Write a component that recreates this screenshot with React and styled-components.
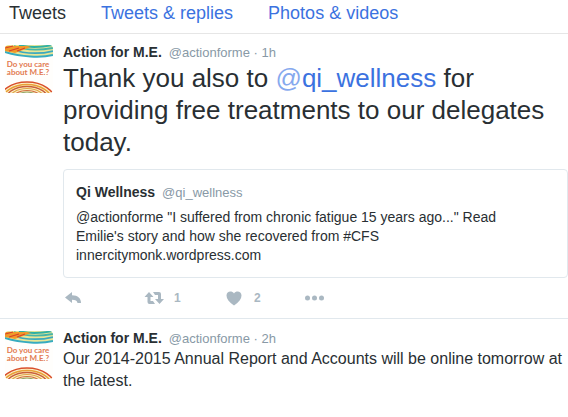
import React from 'react';
import styled, { createGlobalStyle } from 'styled-components';

const GlobalStyle = createGlobalStyle`
  * {
    box-sizing: border-box;
  }

  body {
    margin: 0;
    background: #fff;
    color: #292f33;
    font-family: "Liberation Sans", Arial, sans-serif;
    font-size: 14px;
  }
`;

const Tabs = styled.nav`
  display: flex;
  gap: 35px;
  padding: 3px 9px 10px;
  border-bottom: 1px solid #e6e6e6;
`;

const Tab = styled.a`
  color: ${props => props.$active ? '#292f33' : '#3b72e0'};
  font-size: 18px;
  line-height: 20px;
  white-space: nowrap;
  text-decoration: none;
`;

const TweetItem = styled.article`
  display: flex;
  gap: 10px;
  padding: 12px 0 12px 5px;
  border-bottom: 1px solid #e1e8ed;

  &:first-child {
    padding-top: 11px;
  }

  &:last-child {
    border-bottom: none;
  }
`;

const Avatar = styled.svg`
  flex: none;
  width: 48px;
  height: 48px;
`;

const Content = styled.div`
  flex: 1;
  min-width: 0;
`;

const Byline = styled.header`
  display: flex;
  gap: 7px;
  height: 17px;
  line-height: 15px;
  white-space: nowrap;
`;

const Name = styled.strong`
  font-size: 14px;
`;

const Meta = styled.span`
  color: #8899a6;
  font-size: 13px;
`;

const TweetText = styled.p`
  margin: 0;
  font-size: ${props => props.$large ? '26px' : '16px'};
  line-height: ${props => props.$large ? '32px' : '22px'};
`;

const Mention = styled.a`
  color: #3b72e0;
  text-decoration: none;

  span {
    color: #86a9ee;
  }
`;

const Quote = styled.blockquote`
  margin: 11px 0 0;
  padding: 15px 12px 12px;
  border: 1px solid #e1e8ed;
  border-radius: 4px;
`;

const QuoteText = styled.p`
  margin: 6px 0 0;
  padding-right: 12px;
  font-size: 14px;
  line-height: 19px;
`;

const Actions = styled.div`
  display: flex;
  margin-top: 11px;
  padding-left: 1px;
`;

const Action = styled.button`
  display: flex;
  align-items: center;
  gap: 10px;
  width: 80px;
  height: 17px;
  padding: 0;
  border: none;
  background: none;
  color: #aab8c2;
  font-family: inherit;
  font-size: 12px;
  font-weight: bold;
  cursor: pointer;
`;

const ActionIcon = styled.svg`
  flex: none;
  width: 20px;
  height: 16px;
  fill: currentColor;
`;

const Count = styled.span`
  padding-top: 1px;
`;

function ActionForMeAvatar({ id }) {
  return (
    <Avatar viewBox="0 0 48 48" role="img" aria-label="Action for M.E.">
      <clipPath id={id}>
        <rect width="48" height="48" rx="4" />
      </clipPath>
      <g clipPath={`url(#${id})`} fill="none">
        <rect width="48" height="48" fill="#fffefc" />
        <path d="M0 0H48V10C34 13 20 12 10 9L0 8Z" fill="#e8e696" />
        <path d="M14 0C24 3 38 2 48 0" stroke="#2fb0a4" strokeWidth="2" />
        <path d="M9 1C22 6 36 5 48 3" stroke="#45b4a8" strokeWidth="1.8" />
        <path d="M5 4C20 9 36 9 48 6" stroke="#3aa9c0" strokeWidth="1.8" />
        <path d="M0 7C16 12 36 13 48 10" stroke="#36abc0" strokeWidth="2" />
        <path d="M0 1L22 1L26 2L18 5L10 8L0 6Z" fill="#f09a28" />
        <path d="M0 3L8 1M4 6L14 3M12 6L20 3" stroke="#d8402c" strokeWidth="1.2" />
        <text x="23" y="22" fill="#e27a50" fontFamily="Lato, sans-serif" fontSize="8" fontWeight="bold" textAnchor="middle">Do you care</text>
        <text x="23" y="30" fill="#e27a50" fontFamily="Lato, sans-serif" fontSize="8" fontWeight="bold" textAnchor="middle">about M.E.?</text>
        <ellipse cx="22" cy="56" rx="28" ry="19" fill="#fdf0c6" stroke="#d9502c" strokeWidth="1.5" />
        <ellipse cx="22" cy="56" rx="25" ry="16.500" stroke="#e8a037" strokeWidth="1.5" />
        <ellipse cx="22" cy="56" rx="22" ry="14.500" stroke="#c9603a" strokeWidth="1.5" />
        <ellipse cx="22" cy="56" rx="19" ry="12.500" stroke="#dfa64a" strokeWidth="1.2" />
        <ellipse cx="22" cy="56" rx="16" ry="10.500" stroke="#d07040" strokeWidth="1.2" />
        <ellipse cx="22" cy="56" rx="13" ry="9" stroke="#8fa568" strokeWidth="1.2" />
      </g>
    </Avatar>
  );
}

const icons = {
  Reply: <path d="M1 7.500L8 2V5.200C14 5.200 17 8.500 17 13H13.500C13.200 10.800 11.500 9.800 8 9.800V13Z" />,
  Retweet: <path d="M5 2L9.500 7H6.500V11H9L11 14H5.500Q3.500 14 3.500 12V7H.500ZM9 2H15Q17 2 17 4V9H20L15.500 14L11 9H14V5H11Z" />,
  Like: <path d="M10 15.500C5 12 2.500 9 2.500 5.500C2.500 1 8 .3 10 3.500C12 .3 17.500 1 17.500 5.500C17.500 9 15 12 10 15.500Z" />,
  More: (
    <g>
      <circle cx="3.500" cy="8" r="2.500" />
      <circle cx="10.500" cy="8" r="2.500" />
      <circle cx="17.500" cy="8" r="2.500" />
    </g>
  )
};

const actions = [
  { label: 'Reply' },
  { label: 'Retweet', count: 1 },
  { label: 'Like', count: 2 },
  { label: 'More' }
];

function Tweet({ id, time, children }) {
  return (
    <TweetItem>
      <ActionForMeAvatar id={id} />
      <Content>
        <Byline>
          <Name>Action for M.E.</Name>
          <Meta>@actionforme · {time}</Meta>
        </Byline>
        {children}
      </Content>
    </TweetItem>
  );
}

function App() {
  return (
    <>
      <GlobalStyle />
      <Tabs>
        <Tab href="#tweets" $active>Tweets</Tab>
        <Tab href="#replies">Tweets &amp; replies</Tab>
        <Tab href="#media">Photos &amp; videos</Tab>
      </Tabs>
      <main>
        <Tweet id="avatar-1" time="1h">
          <TweetText $large>
            Thank you also to <Mention href="#qi_wellness"><span>@</span>qi_wellness</Mention> for providing free treatments to our delegates today.
          </TweetText>
          <Quote>
            <Byline>
              <Name>Qi Wellness</Name>
              <Meta>@qi_wellness</Meta>
            </Byline>
            <QuoteText>
              @actionforme "I suffered from chronic fatigue 15 years ago..." Read Emilie's story and how she recovered from #CFS innercitymonk.wordpress.com
            </QuoteText>
          </Quote>
          <Actions>
            {
              actions.map(({ label, count }) => (
                <Action key={label} type="button" aria-label={label}>
                  <ActionIcon viewBox="0 0 20 16">{icons[label]}</ActionIcon>
                  {count && <Count>{count}</Count>}
                </Action>
              ))
            }
          </Actions>
        </Tweet>
        <Tweet id="avatar-2" time="2h">
          <TweetText>
            Our 2014-2015 Annual Report and Accounts will be online tomorrow at the latest.
          </TweetText>
        </Tweet>
      </main>
    </>
  );
}

export default App;
